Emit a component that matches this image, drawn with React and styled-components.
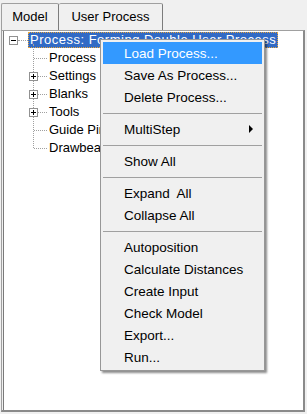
import styled, { createGlobalStyle } from 'styled-components'

// Styles globaux
const GlobalStyle = createGlobalStyle`
   html, body {
      margin: 0;
      padding: 0;
      background: #f0f0f0;
   }
   * {
      box-sizing: border-box;
   }
`

// Fenêtre principale
const Window = styled.div`
   position: relative;
   width: 307px;
   height: 414px;
   overflow: hidden;
   display: flex;
   flex-direction: column;
   background: #f0f0f0;
   font-family: 'Liberation Sans', Arial, sans-serif;
   font-size: 13px;
   color: #000;
`

// Barre des onglets
const TabStrip = styled.div`
   height: 30px;
   display: flex;
   align-items: flex-end;
   padding-left: 1px;
`

const Tab = styled.div`
   height: 27px;
   width: ${(p) => p.$width}px;
   display: flex;
   align-items: center;
   justify-content: center;
   padding-bottom: 1px;
   background: #f0f0f0;
   border: 1px solid #a0a0a0;
   border-right-color: #7c7c7c;
   border-bottom: none;
   border-left: ${(p) => (p.$first ? '1px solid #a0a0a0' : 'none')};
   border-radius: 2px 2px 0 0;
`

// Page de l'onglet
const Page = styled.div`
   flex: 1;
   margin: 0 2px 2px 1px;
   border: 1px solid #a0a0a0;
   border-bottom: 2px solid #8a8a8a;
   border-right: 2px solid #8a8a8a;
   padding: 0 0 0 1px;
   display: flex;
   background: #f0f0f0;
`

const TreeBox = styled.div`
   flex: 1;
   background: #fff;
   border-left: 1px solid #7a7a7a;
`

// Lignes de l'arbre
const Row = styled.div`
   height: 18px;
   display: flex;
   align-items: center;
   padding-left: ${(p) => p.$indent}px;
`

const Expander = styled.div`
   width: 9px;
   height: 9px;
   border: 1px solid #919191;
   background: #fff;
   position: relative;
   flex: none;
   &::before {
      content: '';
      position: absolute;
      left: 1px;
      top: 3px;
      width: 5px;
      height: 1px;
      background: #000;
   }
   &::after {
      content: '';
      display: ${(p) => (p.$open ? 'none' : 'block')};
      position: absolute;
      left: 3px;
      top: 1px;
      width: 1px;
      height: 5px;
      background: #000;
   }
`

const Stub = styled.div`
   width: ${(p) => p.$width}px;
   height: 1px;
   flex: none;
   border-top: 1px dotted #a0a0a0;
   margin-left: ${(p) => p.$offset || 0}px;
`

const Label = styled.span`
   height: 16px;
   line-height: 14px;
   padding: 0 1px;
   white-space: nowrap;
   color: ${(p) => (p.$selected ? '#fff' : '#000')};
   background: ${(p) => (p.$selected ? '#316ac5' : 'transparent')};
   border: 1px dotted ${(p) => (p.$selected ? '#e9a53c' : 'transparent')};
   letter-spacing: ${(p) => (p.$selected ? '0.5px' : '0')};
`

const Children = styled.div`
   position: relative;
`

const VLine = styled.div`
   position: absolute;
   left: 29px;
   top: -5px;
   height: ${(p) => p.$height}px;
   border-left: 1px dotted #a0a0a0;
`

// Menu contextuel
const Menu = styled.div`
   position: absolute;
   left: 100px;
   top: 39px;
   width: 165px;
   padding: 2px;
   background: #f0f0f0;
   border: 1px solid #979797;
   box-shadow: 2px 2px 2px rgba(0, 0, 0, 0.45);
   font-size: 13.5px;
   z-index: 5;
`

const Item = styled.div`
   height: 22px;
   display: flex;
   align-items: center;
   padding-left: 21px;
   padding-right: 8px;
   color: ${(p) => (p.$hover ? '#fff' : '#000')};
   background: ${(p) => (p.$hover ? '#3399ff' : 'transparent')};
   white-space: pre;
`

const Arrow = styled.svg`
   margin-left: auto;
`

const Separator = styled.div`
   height: 10px;
   display: flex;
   align-items: center;
   &::before {
      content: '';
      flex: 1;
      height: 1px;
      background: #a0a0a0;
   }
`

const children = [
   { label: 'Process' },
   { label: 'Settings', plus: true },
   { label: 'Blanks', plus: true },
   { label: 'Tools', plus: true },
   { label: 'Guide Pins' },
   { label: 'Drawbeads' },
]

const menu = [
   { label: 'Load Process...', hover: true },
   { label: 'Save As Process...' },
   { label: 'Delete Process...' },
   'sep',
   { label: 'MultiStep', sub: true },
   'sep',
   { label: 'Show All' },
   'sep',
   { label: 'Expand  All' },
   { label: 'Collapse All' },
   'sep',
   { label: 'Autoposition' },
   { label: 'Calculate Distances' },
   { label: 'Create Input' },
   { label: 'Check Model' },
   { label: 'Export...' },
   { label: 'Run...' },
]

function App() {
   return (
      <Window>
         <GlobalStyle />
         <TabStrip>
            <Tab $first $width={58}>Model</Tab>
            <Tab $width={104}>User Process</Tab>
         </TabStrip>
         <Page>
            <TreeBox>
               <Row $indent={5}>
                  <Expander $open />
                  <Stub $width={10} />
                  <Label $selected>Process: Forming Double User Process</Label>
               </Row>
               <Children>
                  <VLine $height={104} />
                  {children.map((c) => (
                     <Row key={c.label} $indent={25}>
                        {c.plus ? (
                           <>
                              <Expander />
                              <Stub $width={9} />
                           </>
                        ) : (
                           <Stub $width={13} $offset={5} />
                        )}
                        <Label>{c.label}</Label>
                     </Row>
                  ))}
               </Children>
            </TreeBox>
         </Page>
         <Menu>
            {menu.map((m, i) =>
               m === 'sep' ? (
                  <Separator key={i} />
               ) : (
                  <Item key={i} $hover={m.hover}>
                     {m.label}
                     {m.sub && (
                        <Arrow width="5" height="8" viewBox="0 0 5 8">
                           <polygon points="0,0 4,4 0,8" fill="#000" />
                        </Arrow>
                     )}
                  </Item>
               )
            )}
         </Menu>
      </Window>
   )
}

export default App
